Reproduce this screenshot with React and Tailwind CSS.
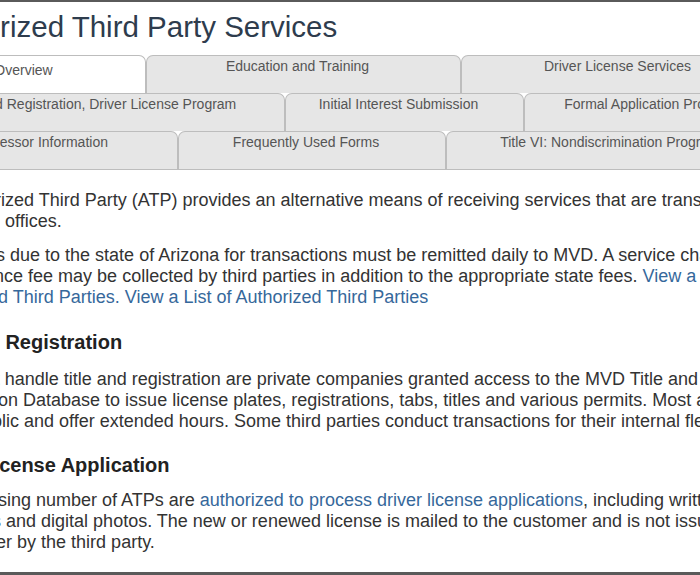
import React from "react";

const tabRows = [
  [
    { label: "Overview", width: "w-[233px]", active: true },
    { label: "Education and Training", width: "w-[315px]" },
    { label: "Driver License Services", width: "flex-1" },
  ],
  [
    { label: "Title and Registration, Driver License Program", width: "w-[372px]" },
    { label: "Initial Interest Submission", width: "w-[239px]" },
    { label: "Formal Application Process", width: "flex-1" },
  ],
  [
    { label: "Processor Information", width: "w-[265px]" },
    { label: "Frequently Used Forms", width: "w-[268px]" },
    { label: "Title VI: Nondiscrimination Program", width: "flex-1" },
  ],
];

const Link = ({ children }) => (
  <a href="#" className="text-[#36689b]">
    {children}
  </a>
);

const App = () => {
  return (
    <div
      className="w-[700px] h-[575px] overflow-hidden bg-white border-t-2 border-b-[3px] border-[#5a5a5a] flex flex-col"
      style={{ fontFamily: '"Liberation Sans", Arial, sans-serif' }}
    >
      <div className="ml-[-87px] w-[873px] shrink-0">
        {/* Page title */}
        <h1 className="pl-[10px] mt-[8px] text-[29.5px] leading-[34px] text-[#2e3c4d] font-normal whitespace-nowrap">
          Authorized Third Party Services
        </h1>

        {/* Tabs */}
        <div className="mt-[11px] flex flex-col border-b border-[#bdbdbd]">
          {tabRows.map((row, i) => (
            <div key={i} className="flex h-[38px]">
              {row.map((tab) => (
                <div
                  key={tab.label}
                  className={`${tab.width} shrink-0 rounded-t-[7px] border border-b-0 border-[#bdbdbd] pr-[12px] text-center text-[14px] leading-[16px] text-[#555] whitespace-nowrap ${
                    tab.active ? "bg-white pt-[6px]" : "bg-[#e6e6e6] pt-[2px]"
                  }`}
                >
                  {tab.label}
                </div>
              ))}
            </div>
          ))}
        </div>

        {/* Body */}
        <div className="pl-[9px] text-[18px] leading-[21px] text-[#333] whitespace-nowrap">
          <p className="mt-[20px]">
            An Authorized Third Party (ATP) provides an alternative means of receiving services that are transacted at
            <br />
            MVD field offices.
          </p>
          <p className="mt-[13px]">
            All monies due to the state of Arizona for transactions must be remitted daily to MVD. A service charge or
            <br />
            convenience fee may be collected by third parties in addition to the appropriate state fees.{" "}
            <Link>View a List of</Link>
            <br />
            <Link>Authorized Third Parties.</Link> <Link>View a List of Authorized Third Parties</Link>
          </p>

          <h2 className="mt-[22px] -ml-[4px] text-[20px] leading-[24px] font-bold text-[#222]">
            Title and Registration
          </h2>
          <p className="mt-[15px]">
            ATPs that handle title and registration are private companies granted access to the MVD Title and
            <br />
            Registration Database to issue license plates, registrations, tabs, titles and various permits. Most are open
            <br />
            to the public and offer extended hours. Some third parties conduct transactions for their internal fleet.
          </p>

          <h2 className="mt-[21px] -ml-[4px] text-[20px] leading-[24px] font-bold text-[#222]">
            Driver License Application
          </h2>
          <p className="mt-[13px]">
            An increasing number of ATPs are <Link>authorized to process driver license applications</Link>, including written
            <br />
            road tests and digital photos. The new or renewed license is mailed to the customer and is not issued over
            <br />
            the counter by the third party.
          </p>
        </div>
      </div>
    </div>
  );
};

export default App;
